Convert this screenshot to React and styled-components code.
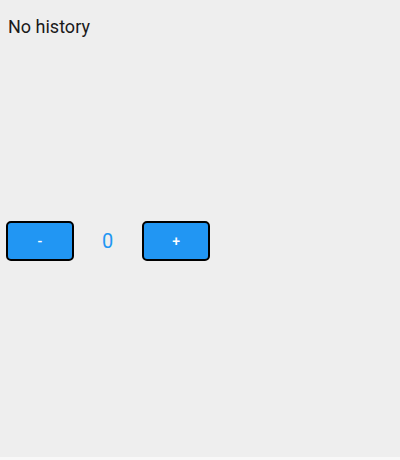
import React, { useState } from "react";
import styled, { createGlobalStyle } from "styled-components";

const GlobalStyle = createGlobalStyle`
  body {
    margin: 0;
    background: #f8f8f8;
    font-family: Roboto, "Liberation Sans", sans-serif;
  }
`;

const Screen = styled.div`
  height: 457px;
  background: #eeeeee;
  display: flex;
  flex-direction: column;
`;

const History = styled.div`
  padding: 16px 8px 0;
  font-size: 18px;
  line-height: 21px;
  color: #1a1a1a;
`;

const CounterArea = styled.div`
  flex: 1;
  display: flex;
  align-items: center;
  padding: 0 6px 12px;
`;

const Counter = styled.div`
  display: flex;
  align-items: center;
`;

const StepButton = styled.button`
  width: 68px;
  height: 40px;
  border: 2px solid #000;
  border-radius: 5px;
  background: #2196f3;
  color: #fff;
  font-family: Roboto, "Liberation Sans", sans-serif;
  font-size: 14px;
  font-weight: 500;
  cursor: pointer;
`;

const Count = styled.span`
  margin: 0 29px 0 28px;
  font-size: 20px;
  color: #2196f3;
`;

export default function App() {
  const [count, setCount] = useState(0);
  return (
    <>
      <GlobalStyle />
      <Screen>
        <History>No history</History>
        <CounterArea>
          <Counter>
            <StepButton onClick={() => setCount(count - 1)}>-</StepButton>
            <Count>{count}</Count>
            <StepButton onClick={() => setCount(count + 1)}>+</StepButton>
          </Counter>
        </CounterArea>
      </Screen>
    </>
  );
}
